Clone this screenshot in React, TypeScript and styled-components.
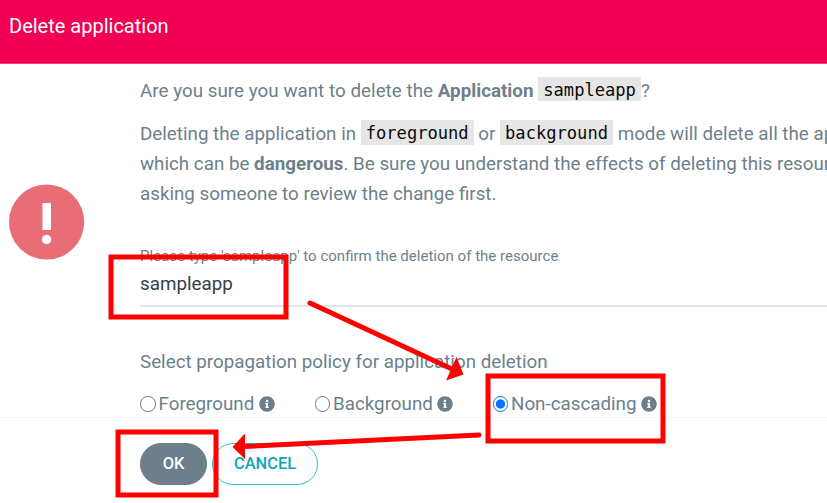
import React, { useState } from 'react';
import styled, { createGlobalStyle } from 'styled-components';
import { FaInfoCircle } from 'react-icons/fa';

const GlobalStyle = createGlobalStyle`
  *, *::before, *::after { box-sizing: border-box; }
  body { margin: 0; background: #fff; overflow: hidden; }
`;

const Dialog = styled.main`
  position: relative;
  width: 827px;
  height: 503px;
  overflow: hidden;
  background: #fff;
  color: #6d7f8b;
  font-family: Roboto, sans-serif;
  font-size: 18.79px;
`;

const Header = styled.header`
  height: 64px;
  padding: 11px 0 0 9px;
  background: #f10053;
  border-bottom: 1px solid #f5407e;
  color: #fff;
`;

const Title = styled.h1`
  margin: 0;
  font-size: 20px;
  font-weight: 400;
  line-height: 30px;
`;

const Content = styled.section`
  display: grid;
  grid-template-columns: 131px 1fr;
  height: 354px;
  padding-left: 9px;
  border-bottom: 1px solid #f6f7f7;
`;

const WarningIcon = styled.svg`
  width: 76px;
  height: 76px;
  margin-top: 120px;
`;

const Details = styled.div`
  min-width: 0;
  padding-top: 12px;
`;

const Message = styled.p`
  margin: 0 0 13px;
  line-height: 30px;
  white-space: nowrap;
`;

const Line = styled.span`
  display: block;
  height: 30px;
`;

const Code = styled.code`
  display: inline-block;
  height: 25px;
  margin-top: 1px;
  padding: 0 5px;
  background: #e6e6e6;
  color: #0a0a0a;
  font-family: "DejaVu Sans Mono", monospace;
  font-size: 17.1px;
  line-height: 27px;
  vertical-align: top;
`;

const Question = styled(Line)`
  word-spacing: 0.14px;

  ${Code} {
    height: 24px;
  }
`;

const Field = styled.label`
  display: flex;
  flex-direction: column;
  height: 62px;
  margin-top: 36px;
  border-bottom: 2px solid #dee6eb;
`;

const FieldLabel = styled.span`
  font-size: 15.04px;
  line-height: 22px;
`;

const Input = styled.input`
  height: 34px;
  padding: 0;
  border: 0;
  outline: 0;
  background: transparent;
  color: #363c4a;
  font: 400 18.79px/34px Roboto, sans-serif;
`;

const PolicyTitle = styled.p`
  margin: 40px 0 0;
  line-height: 30px;
`;

const PolicyList = styled.div`
  display: flex;
  margin-top: 12px;
`;

const Policy = styled.label<{ $width: number }>`
  display: flex;
  align-items: center;
  width: ${(p) => p.$width}px;
  height: 30px;
  white-space: nowrap;

  svg {
    flex: none;
    width: 16px;
    height: 16px;
    margin-left: 4.5px;
  }
`;

const Radio = styled.input`
  appearance: none;
  flex: none;
  width: 15.5px;
  height: 15.5px;
  margin: 0 3px 0 0;
  border: 1.2px solid #767676;
  border-radius: 50%;

  &:checked {
    border-color: #0075ff;
    background: radial-gradient(circle, #0075ff 4.2px, #fff 5px);
  }
`;

const Actions = styled.footer`
  display: flex;
  gap: 5px;
  padding: 25px 0 0 140px;
`;

const Button = styled.button<{ $primary?: boolean }>`
  width: ${(p) => (p.$primary ? 67 : 106)}px;
  height: 42px;
  padding: 0;
  border: 1px solid ${(p) => (p.$primary ? '#6d7f8b' : '#2cbfce')};
  border-radius: 21px;
  background: ${(p) => (p.$primary ? '#6d7f8b' : '#fff')};
  color: ${(p) => (p.$primary ? '#fff' : '#0ea5b5')};
  font: 500 16.4px/40px Roboto, sans-serif;
`;

const Annotations = styled.svg`
  position: absolute;
  inset: 0;
  pointer-events: none;
`;

const policies = [
  { name: 'Foreground', width: 174.5 },
  { name: 'Background', width: 178 },
  { name: 'Non-cascading', width: 180 },
];

export default function App() {
  const [policy, setPolicy] = useState('Non-cascading');
  const [name, setName] = useState('sampleapp');

  return (
    <Dialog>
      <GlobalStyle />
      <Header>
        <Title>Delete application</Title>
      </Header>
      <Content>
        <WarningIcon viewBox="0 0 76 76" aria-hidden="true">
          <circle cx="37.6" cy="38" r="37.6" fill="#e96d76" />
          <path d="M33.500 19h8.500v27h-8.500z" fill="#fff" />
          <circle cx="37.6" cy="55.5" r="4.7" fill="#fff" />
        </WarningIcon>
        <Details>
          <Message>
            <Question>
              Are you sure you want to delete the <strong>Application</strong> <Code>sampleapp</Code>?
            </Question>
          </Message>
          <Message>
            <Line>
              Deleting the application in <Code>foreground</Code> or <Code>background</Code> mode will delete all the app
            </Line>
            <Line>
              which can be <strong>dangerous</strong>. Be sure you understand the effects of deleting this resour
            </Line>
            <Line>asking someone to review the change first.</Line>
          </Message>
          <Field>
            <FieldLabel>Please type 'sampleapp' to confirm the deletion of the resource</FieldLabel>
            <Input value={name} onChange={(e) => setName(e.target.value)} />
          </Field>
          <PolicyTitle>Select propagation policy for application deletion</PolicyTitle>
          <PolicyList>
            {policies.map((item) => (
              <Policy key={item.name} $width={item.width}>
                <Radio
                  type="radio"
                  name="policy"
                  checked={policy === item.name}
                  onChange={() => setPolicy(item.name)}
                />
                <span>{item.name}</span>
                <FaInfoCircle />
              </Policy>
            ))}
          </PolicyList>
        </Details>
      </Content>
      <Actions>
        <Button $primary>OK</Button>
        <Button>CANCEL</Button>
      </Actions>
      <Annotations width="827" height="503" viewBox="0 0 827 503" aria-hidden="true">
        <g fill="none" stroke="#f00" strokeWidth="5">
          <path d="M111 257h175v60H111z" />
          <path d="M488 376h175v65H488z" />
          <path d="M118 432h98v63h-98z" />
          <path d="M310 303L453 369.500M479 435L244 446.500" strokeLinecap="round" />
        </g>
        <path d="M463.500 374.500L456.500 357L446 380.500zM232.500 447L245 433.500V459z" fill="#f00" />
      </Annotations>
    </Dialog>
  );
}
